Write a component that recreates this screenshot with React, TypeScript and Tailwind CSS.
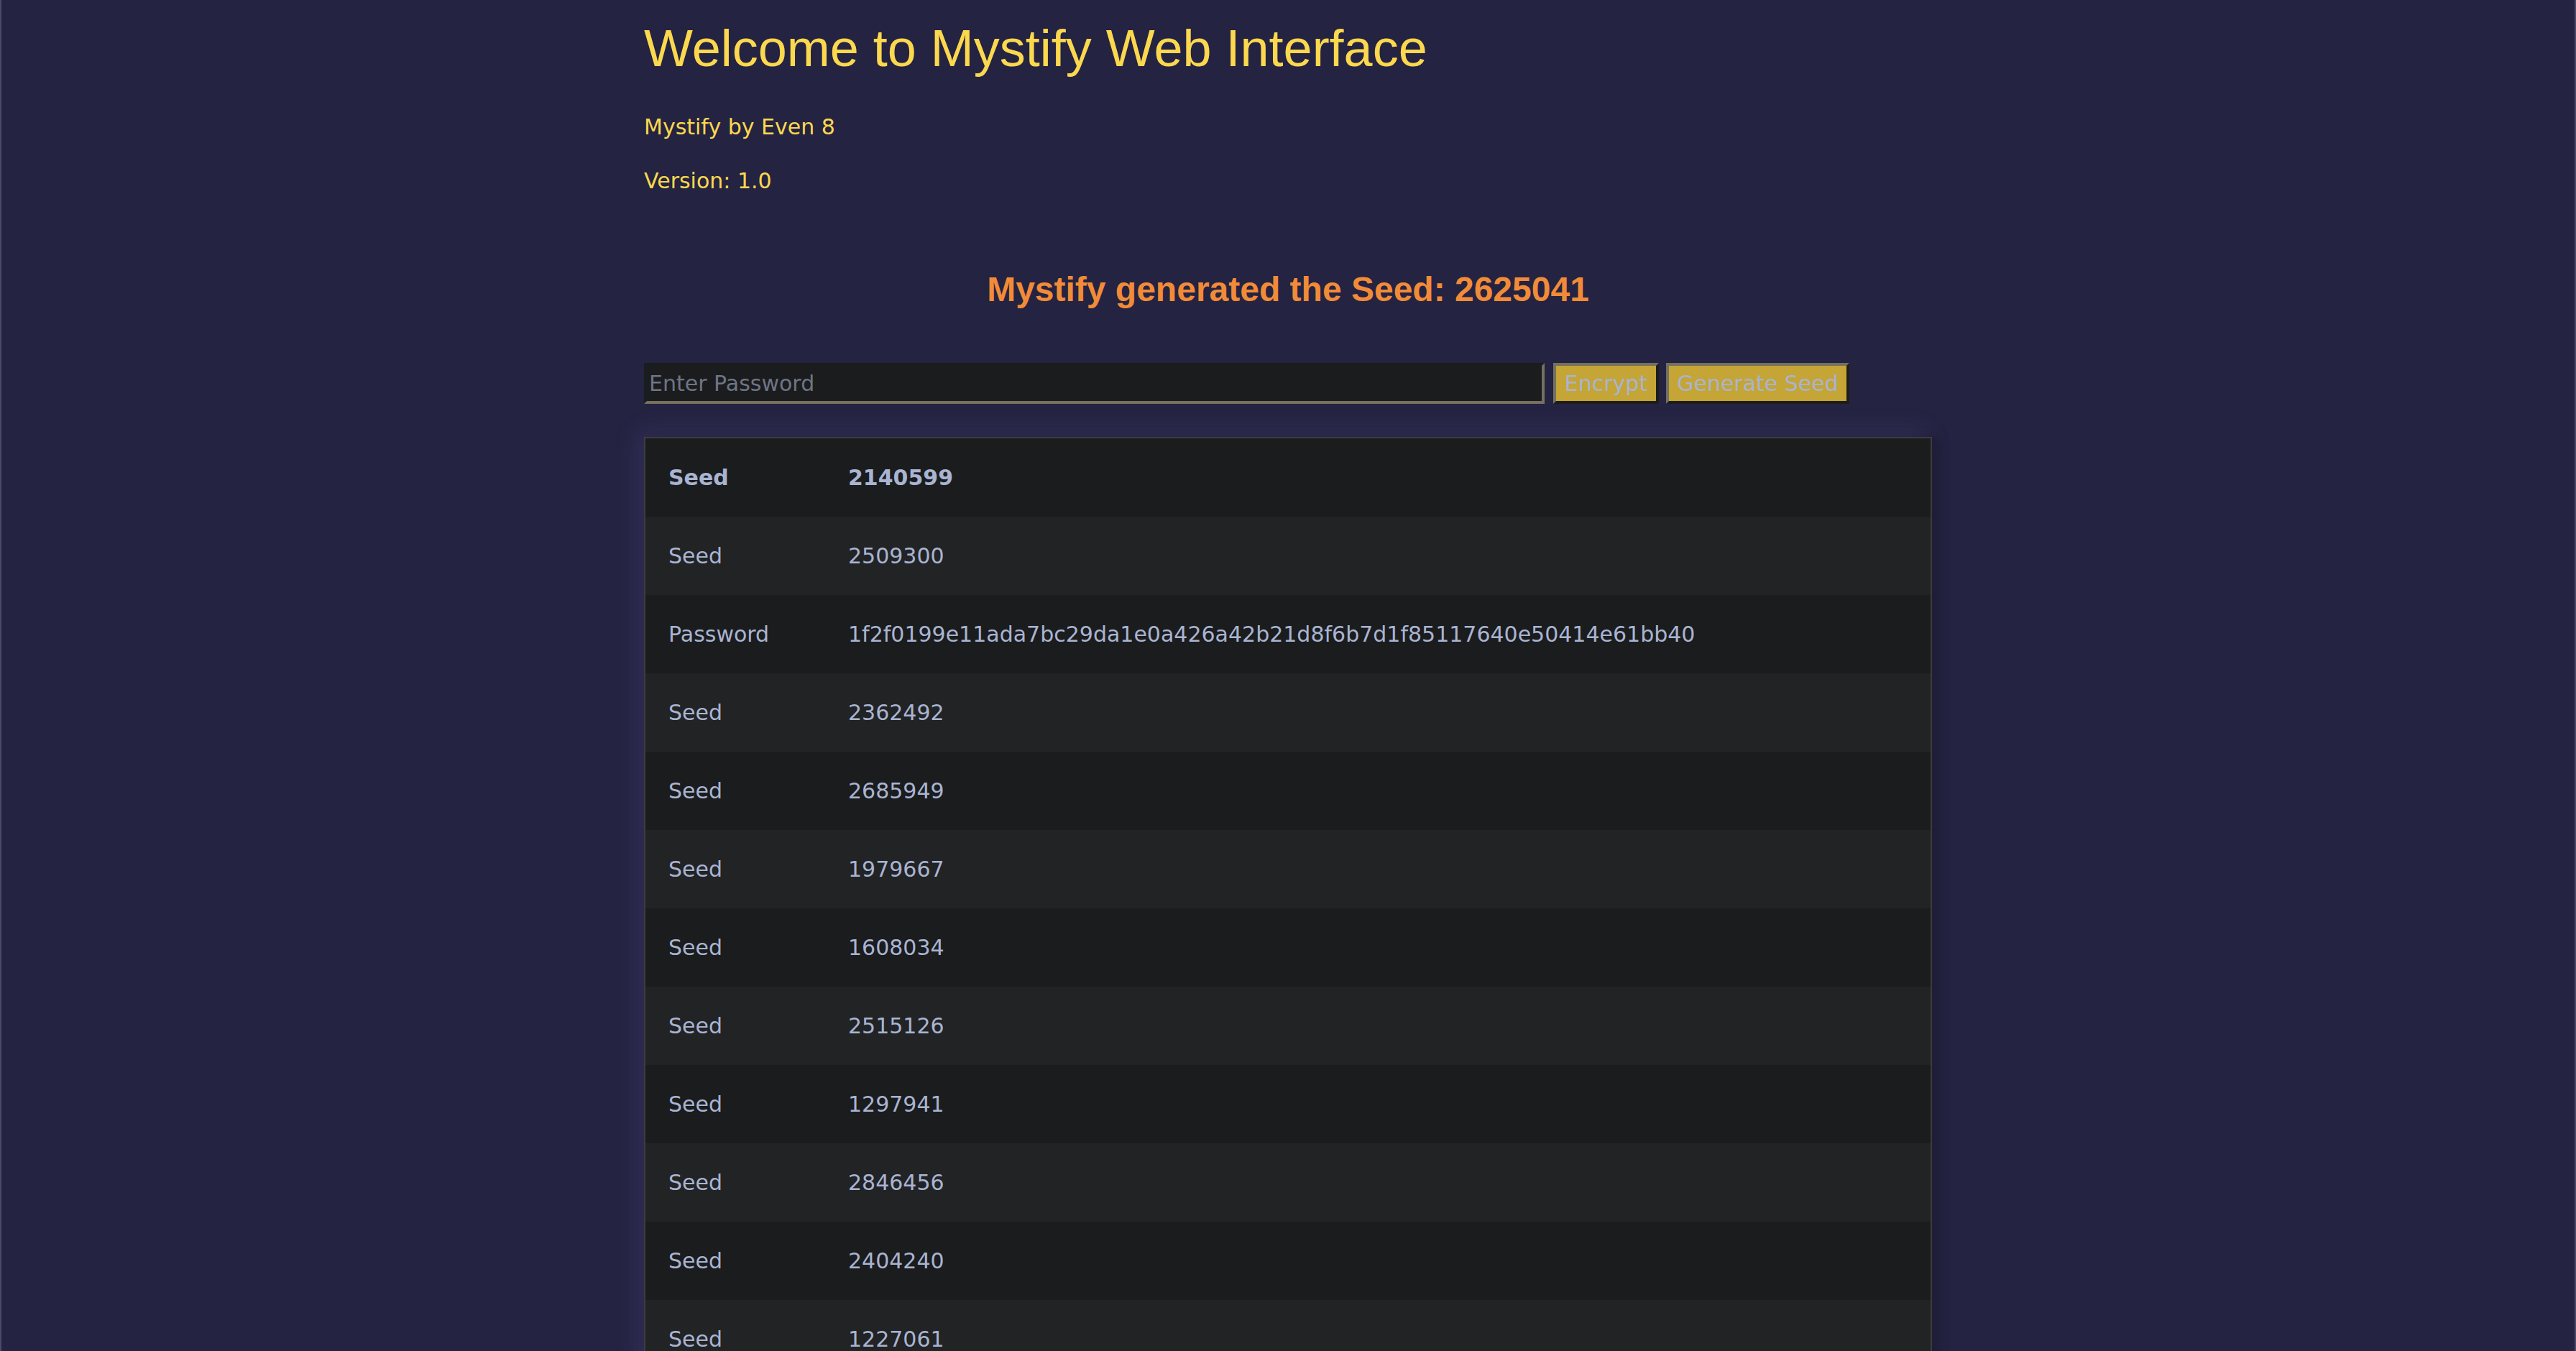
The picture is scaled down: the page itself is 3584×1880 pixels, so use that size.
const rows = [
  { label: "Seed", value: "2140599", bold: true },
  { label: "Seed", value: "2509300" },
  { label: "Password", value: "1f2f0199e11ada7bc29da1e0a426a42b21d8f6b7d1f85117640e50414e61bb40" },
  { label: "Seed", value: "2362492" },
  { label: "Seed", value: "2685949" },
  { label: "Seed", value: "1979667" },
  { label: "Seed", value: "1608034" },
  { label: "Seed", value: "2515126" },
  { label: "Seed", value: "1297941" },
  { label: "Seed", value: "2846456" },
  { label: "Seed", value: "2404240" },
  { label: "Seed", value: "1227061" },
];

const verdana = "font-['DejaVu_Sans',Verdana,sans-serif]";
const arial = "font-['Liberation_Sans',Arial,sans-serif]";

const App = () => {
  return (
    <div className="h-[1880px] overflow-hidden bg-[#242342] border-x-2 border-[#4a4a66]">
      <div className="mx-auto w-[1792px]">
        {/* Header */}
        <h1 className={`${arial} pt-[31px] text-[72px] leading-none text-[#fcd84e]`}>
          Welcome to Mystify Web Interface
        </h1>
        <p className={`${verdana} mt-[59px] text-[30px] leading-none text-[#fcd84e]`}>
          Mystify by Even 8
        </p>
        <p className={`${verdana} mt-[45px] text-[30px] leading-none text-[#fcd84e]`}>
          Version: 1.0
        </p>

        <h2 className={`${arial} mt-[112px] text-center text-[48px] font-bold leading-none text-[#f28b38]`}>
          Mystify generated the Seed: 2625041
        </h2>

        {/* Controls */}
        <div className={`${verdana} mt-[78px] flex h-[57px] items-stretch gap-[12px] text-[30px]`}>
          <input
            type="text"
            placeholder="Enter Password"
            className="w-[1253px] border-4 border-t-[#1b1c1e] border-l-[#1b1c1e] border-b-[#75705f] border-r-[#75705f] bg-[#1b1c1e] px-[3px] text-[#a9b4d1] outline-none placeholder:text-[#6e7585]"
          />
          <button className="w-[147px] border-4 border-t-[#75705f] border-l-[#75705f] border-b-[#1d1d1b] border-r-[#1d1d1b] bg-[#c4a535] text-[#a9b4d1]">
            Encrypt
          </button>
          <button className="ml-[-2px] w-[255px] border-4 border-t-[#75705f] border-l-[#75705f] border-b-[#1d1d1b] border-r-[#1d1d1b] bg-[#c4a535] text-[#a9b4d1]">
            Generate Seed
          </button>
        </div>

        {/* History table */}
        <div
          className={`${verdana} mt-[46px] border-2 border-[#3b3c3f] text-[30px] text-[#a9b4d1] shadow-[-8px_-8px_32px_rgba(110,110,180,0.2),10px_0_14px_rgba(0,0,0,0.28)]`}
        >
          {rows.map((row, i) => (
            <div
              key={i}
              className={`grid h-[109px] grid-cols-[250px_1fr] items-center ${
                i % 2 === 0 ? "bg-[#1b1c1e]" : "bg-[#222325]"
              } ${row.bold ? "font-bold" : ""}`}
            >
              <span className="pl-[32px]">{row.label}</span>
              <span className="pl-[32px]">{row.value}</span>
            </div>
          ))}
        </div>
      </div>
    </div>
  );
};

export default App;
